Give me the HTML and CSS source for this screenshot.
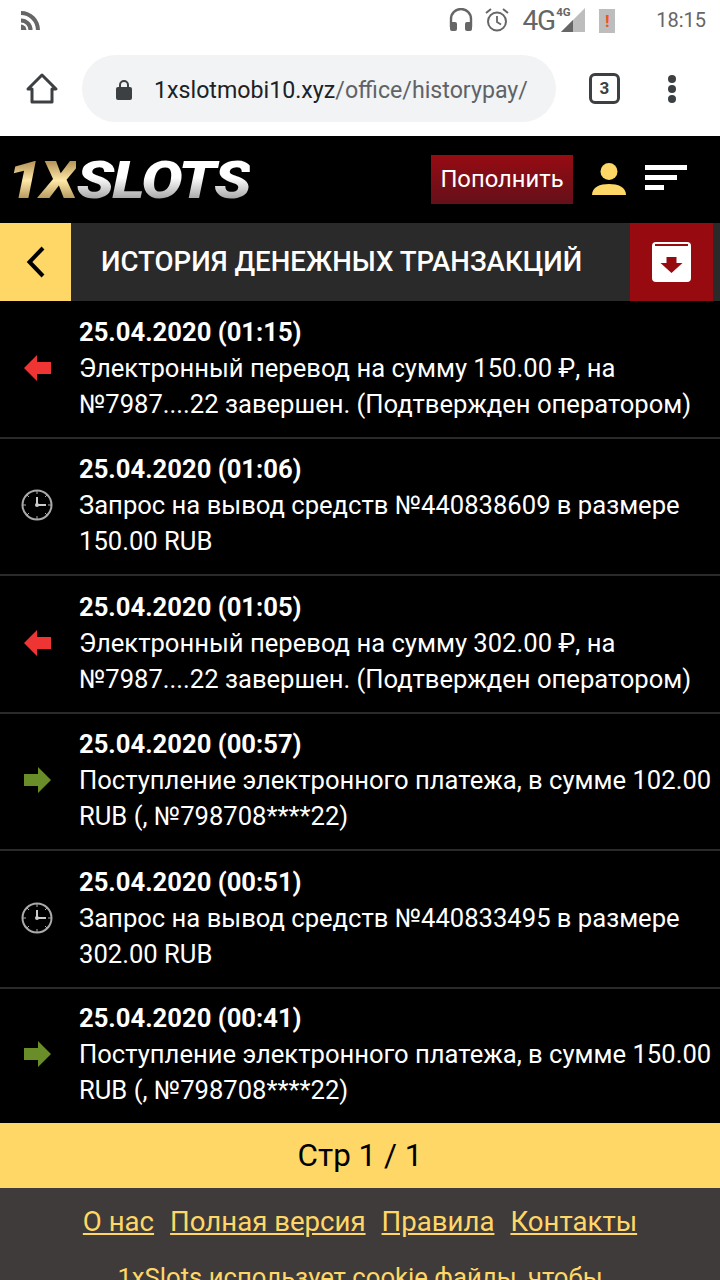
FILE: index.html
```html
<!DOCTYPE html>
<html lang="ru">
<head>
    <meta charset="UTF-8">
    <meta name="viewport" content="width=device-width, initial-scale=1.0">
    <title>История денежных транзакций</title>
    <link rel="stylesheet" href="styles.css">
</head>
<body>
    <div class="status-bar">
        <svg class="cast" width="19" height="19" viewBox="1 3 14 14"><path d="M1 3v3a11 11 0 0 1 11 11h3A14 14 0 0 0 1 3z" fill="#666"/><path d="M1 8.500v3a5.500 5.500 0 0 1 5.500 5.500h3A8.500 8.500 0 0 0 1 8.500z" fill="#666"/><path d="M1 13v4h4a4 4 0 0 0-4-4z" fill="#666"/></svg>
        <div class="status-right">
            <svg width="24" height="24" viewBox="0 0 24 24"><path d="M2 19v-8a10 10 0 0 1 20 0v8" fill="none" stroke="#666" stroke-width="2.400"/><rect x="1" y="14" width="7" height="9" rx="2" fill="#666"/><rect x="16" y="14" width="7" height="9" rx="2" fill="#666"/></svg>
            <svg class="alarm" width="26" height="26" viewBox="0 0 26 26"><circle cx="13" cy="14.500" r="9" fill="none" stroke="#666" stroke-width="2"/><path d="M13 9v6l4 2.500" fill="none" stroke="#666" stroke-width="1.800"/><path d="M2 6l5-4M24 6l-5-4" stroke="#666" stroke-width="2"/></svg>
            <span class="net">4G</span>
            <div class="signal">
                <span class="net-small">4G</span>
                <svg width="24" height="24" viewBox="0 0 24 24"><path d="M24 0v24H0z" fill="#bdbdbd"/><path d="M12 12v12H0z" fill="#666"/></svg>
            </div>
            <div class="battery">!</div>
            <span class="clock">18:15</span>
        </div>
    </div>

    <div class="browser-bar">
        <svg class="home" width="34" height="34" viewBox="0 0 34 34"><path d="M3 17L17 3l14 14h-4v13H7V17z" fill="none" stroke="#3c4043" stroke-width="3" stroke-linejoin="round"/></svg>
        <div class="url-box">
            <svg width="18" height="22" viewBox="0 0 18 22"><path d="M5 9V6a4 4 0 0 1 8 0v3" fill="none" stroke="#3c4043" stroke-width="2"/><rect x="1" y="8" width="16" height="13" rx="2" fill="#3c4043"/></svg>
            <span class="url"><b>1xslotmobi10.xyz</b>/office/historypay/</span>
        </div>
        <div class="tabs">3</div>
        <div class="dots"><i></i><i></i><i></i></div>
    </div>

    <header class="site-header">
        <div class="logo"><span class="logo-gold">1X</span><span class="logo-silver">SLOTS</span></div>
        <div class="header-right">
            <a class="deposit" href="#">Пополнить</a>
            <svg width="34" height="34" viewBox="0 0 34 34"><circle cx="17" cy="9.500" r="8.500" fill="#ffd766"/><path d="M0 33c0-8 8-11 17-11s17 3 17 11z" fill="#ffd766"/></svg>
            <div class="burger"><i class="w1"></i><i class="w2"></i><i class="w3"></i></div>
        </div>
    </header>

    <div class="title-bar">
        <a class="back" href="#"><svg width="20" height="32" viewBox="0 0 20 32"><path d="M17 2L3.500 16 17 30" fill="none" stroke="#000" stroke-width="4"/></svg></a>
        <h1>История денежных транзакций</h1>
        <a class="archive" href="#"><svg width="39" height="40" viewBox="0 0 39 40"><rect width="39" height="40" rx="4" fill="#fff"/><rect x="3" y="2" width="33" height="2" fill="#970b10"/><path d="M14.500 15h10v6h6L19.500 31 8.500 21h6z" fill="#970b10"/></svg></a>
    </div>

    <ul class="history">
        <li class="item">
            <div class="item-icon"><svg width="27" height="26" viewBox="0 0 27 26"><path d="M0 13L13 0v7h14v12H13v7z" fill="#ee3534"/></svg></div>
            <div class="item-text"><b>25.04.2020 (01:15)</b><br>Электронный перевод на сумму 150.00 ₽, на №7987....22 завершен. (Подтвержден оператором)</div>
        </li>
        <li class="item">
            <div class="item-icon"><svg width="32" height="32" viewBox="0 0 32 32"><circle cx="16" cy="16" r="14.500" fill="none" stroke="#aaa" stroke-width="2"/><path d="M16 8v8h9" fill="none" stroke="#ccc" stroke-width="2"/><circle cx="16" cy="16" r="2" fill="#ccc"/><path d="M16 2v3M16 27v3M2 16h3M27 16h3M6 6l2 2M26 6l-2 2M6 26l2-2M26 26l-2-2" stroke="#aaa" stroke-width="1"/></svg></div>
            <div class="item-text"><b>25.04.2020 (01:06)</b><br>Запрос на вывод средств №440838609 в размере 150.00 RUB</div>
        </li>
        <li class="item">
            <div class="item-icon"><svg width="27" height="26" viewBox="0 0 27 26"><path d="M0 13L13 0v7h14v12H13v7z" fill="#ee3534"/></svg></div>
            <div class="item-text"><b>25.04.2020 (01:05)</b><br>Электронный перевод на сумму 302.00 ₽, на №7987....22 завершен. (Подтвержден оператором)</div>
        </li>
        <li class="item">
            <div class="item-icon"><svg width="27" height="26" viewBox="0 0 27 26"><path d="M27 13L14 0v7H0v12h14v7z" fill="#688d29"/></svg></div>
            <div class="item-text"><b>25.04.2020 (00:57)</b><br>Поступление электронного платежа, в сумме 102.00 RUB (, №798708****22)</div>
        </li>
        <li class="item">
            <div class="item-icon"><svg width="32" height="32" viewBox="0 0 32 32"><circle cx="16" cy="16" r="14.500" fill="none" stroke="#aaa" stroke-width="2"/><path d="M16 8v8h9" fill="none" stroke="#ccc" stroke-width="2"/><circle cx="16" cy="16" r="2" fill="#ccc"/><path d="M16 2v3M16 27v3M2 16h3M27 16h3M6 6l2 2M26 6l-2 2M6 26l2-2M26 26l-2-2" stroke="#aaa" stroke-width="1"/></svg></div>
            <div class="item-text"><b>25.04.2020 (00:51)</b><br>Запрос на вывод средств №440833495 в размере 302.00 RUB</div>
        </li>
        <li class="item">
            <div class="item-icon"><svg width="27" height="26" viewBox="0 0 27 26"><path d="M27 13L14 0v7H0v12h14v7z" fill="#688d29"/></svg></div>
            <div class="item-text"><b>25.04.2020 (00:41)</b><br>Поступление электронного платежа, в сумме 150.00 RUB (, №798708****22)</div>
        </li>
    </ul>

    <div class="pager">Стр 1 / 1</div>

    <footer class="site-footer">
        <nav class="footer-links">
            <a href="#">О нас</a>
            <a href="#">Полная версия</a>
            <a href="#">Правила</a>
            <a href="#">Контакты</a>
        </nav>
        <p class="cookie">1xSlots использует cookie файлы, чтобы</p>
    </footer>
</body>
</html>
```

FILE: styles.css
```css
html, body {
    height: 1280px;
    overflow: hidden;
}
body {
    margin: 0;
    font-family: 'Roboto', sans-serif;
    background: #000;
    color: #fff;
}
i {
    display: block;
}

.status-bar {
    height: 40px;
    background: #fff;
    display: flex;
    justify-content: space-between;
    align-items: center;
    padding: 0 14px 0 21px;
}
.status-right {
    display: flex;
    align-items: center;
    color: #666;
}
.alarm {
    margin-left: 11px;
}
.net {
    font-size: 28px;
    margin-left: 12px;
    letter-spacing: -1px;
}
.signal {
    position: relative;
    width: 24px;
    height: 24px;
    margin-left: 6px;
}
.net-small {
    position: absolute;
    left: -5px;
    top: -2px;
    font-size: 11.500px;
    font-weight: 700;
    background: #fff;
    line-height: 12px;
}
.battery {
    width: 16px;
    height: 24px;
    margin: 2px 0 0 14px;
    background: #bdbdbd;
    color: #f4511e;
    font-size: 17px;
    font-weight: 700;
    line-height: 24px;
    text-align: center;
}
.clock {
    font-size: 20px;
    margin-left: 41px;
}

.browser-bar {
    height: 96px;
    background: #fff;
    display: flex;
    align-items: flex-start;
    padding-top: 15px;
    box-sizing: border-box;
}
.home {
    margin: 17px 0 0 25px;
}
.url-box {
    width: 474px;
    height: 67px;
    margin-left: 23px;
    background: #f1f3f4;
    border-radius: 34px;
    display: flex;
    align-items: center;
    box-sizing: border-box;
    padding: 2px 0 0 33px;
}
.url {
    font-size: 23.200px;
    color: #5f6368;
    margin-left: 21px;
    white-space: nowrap;
}
.url b {
    font-weight: 400;
    color: #202124;
}
.tabs {
    width: 25px;
    height: 25px;
    margin: 18px 0 0 33px;
    border: 3px solid #3c4043;
    border-radius: 6px;
    font-size: 17px;
    font-weight: 700;
    color: #3c4043;
    text-align: center;
    line-height: 25px;
}
.dots {
    margin: 20px 0 0 48px;
}
.dots i {
    width: 8px;
    height: 8px;
    border-radius: 50%;
    background: #3c4043;
    margin-bottom: 2px;
}

.site-header {
    height: 87px;
    display: flex;
    justify-content: space-between;
    align-items: center;
    padding: 0 33px 0 13px;
}
.logo {
    font-family: 'Roboto', sans-serif;
    font-size: 52px;
    font-weight: 900;
    font-style: italic;
    letter-spacing: -1.500px;
    line-height: 1;
    white-space: nowrap;
    margin: 2px 0 0 -6px;
    transform: scaleX(1.190);
    transform-origin: left center;
}
.logo-gold {
    background: linear-gradient(180deg, #b8975a 20%, #ffe9a8 50%, #a9894f 85%);
    -webkit-background-clip: text;
    background-clip: text;
    color: transparent;
}
.logo-silver {
    background: linear-gradient(180deg, #fff 20%, #fff 45%, #9a9a9a 85%);
    -webkit-background-clip: text;
    background-clip: text;
    color: transparent;
}
.header-right {
    display: flex;
    align-items: center;
}
.deposit {
    width: 142px;
    height: 49px;
    background: linear-gradient(180deg, #970b12, #64101a);
    color: #fff;
    font-size: 23.800px;
    line-height: 49px;
    text-align: center;
    text-decoration: none;
}
.header-right svg {
    margin-left: 19px;
    margin-bottom: 2px;
}
.burger {
    margin-left: 19px;
    margin-bottom: 4px;
}
.burger i {
    height: 5px;
    background: #fff;
    margin-bottom: 5px;
}
.burger i:last-child {
    margin-bottom: 0;
}
.w1 {
    width: 42px;
}
.w2 {
    width: 32px;
}
.w3 {
    width: 19px;
}

.title-bar {
    height: 78px;
    background: #2a2a2a;
    display: flex;
    align-items: center;
}
.back {
    width: 71px;
    height: 78px;
    background: #ffd766;
    display: flex;
    align-items: center;
    justify-content: center;
}
.title-bar h1 {
    flex: 1;
    margin: 0 0 2px 30px;
    font-size: 27.600px;
    font-weight: 500;
    text-transform: uppercase;
    white-space: nowrap;
}
.archive {
    width: 83px;
    height: 78px;
    margin-right: 7px;
    background: #970b10;
    display: flex;
    align-items: center;
    justify-content: center;
}

.history {
    list-style: none;
    margin: 0;
    padding: 0;
}
.item {
    height: 137.500px;
    box-sizing: border-box;
    padding-bottom: 2px;
    display: flex;
    align-items: center;
    border-bottom: 2px solid #2a2a2a;
}
.item:last-child {
    height: 134.500px;
    padding-bottom: 4px;
    border-bottom: 0;
}
.item-icon {
    width: 74px;
    margin-right: 5px;
    display: flex;
    justify-content: center;
    flex-shrink: 0;
}
.item-text {
    font-size: 25.600px;
    line-height: 36px;
    margin-right: -6px;
}

.pager {
    height: 65px;
    background: #ffd766;
    color: #000;
    font-size: 31.400px;
    line-height: 65px;
    text-align: center;
}

.site-footer {
    background: #3f3b3b;
    color: #ffd766;
    text-align: center;
    padding-top: 17px;
    height: 92px;
    box-sizing: border-box;
}
.footer-links {
    display: flex;
    justify-content: center;
    gap: 16px;
    font-size: 27.600px;
    line-height: 34px;
}
.footer-links a {
    color: #ffd766;
}
.cookie {
    margin: 21px 0 0;
    font-size: 25.700px;
    line-height: 34px;
    white-space: nowrap;
}
```
